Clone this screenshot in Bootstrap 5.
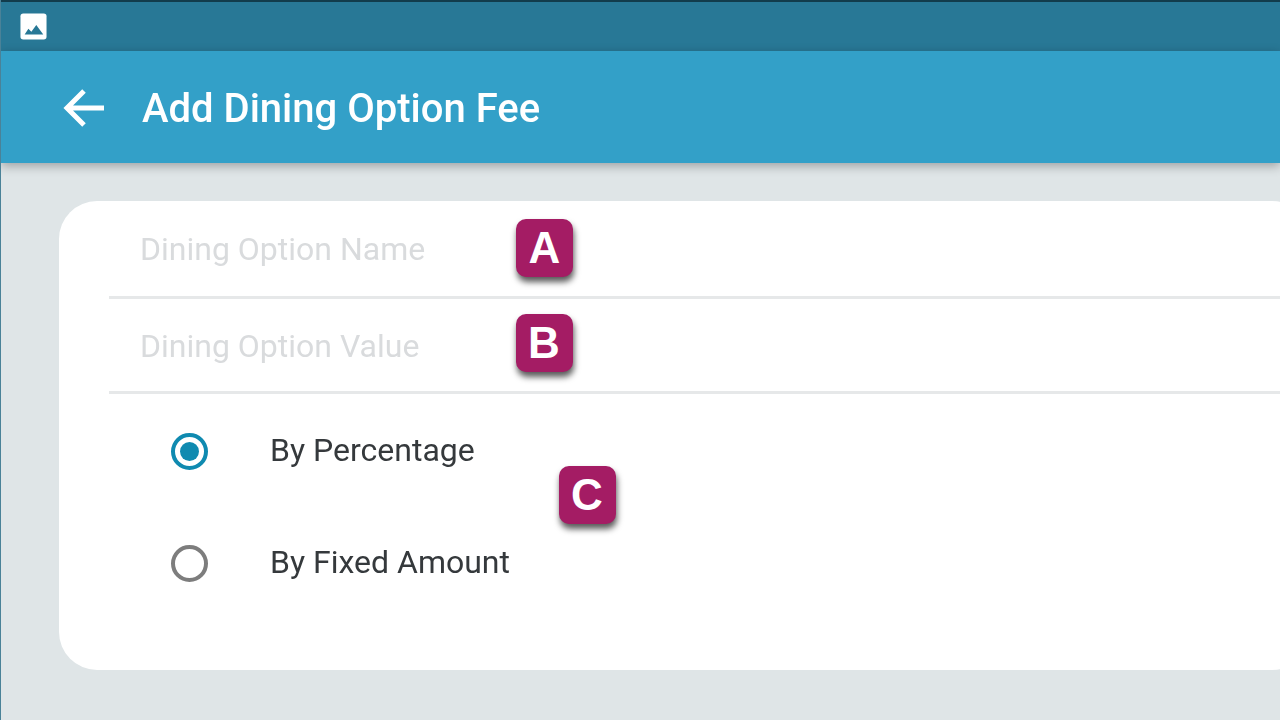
<!DOCTYPE html>
<html lang="en">
<head>
<meta charset="utf-8">
<title>Add Dining Option Fee</title>
<link rel="stylesheet" href="https://cdn.jsdelivr.net/npm/bootstrap@5.3.0/dist/css/bootstrap.min.css">
<style>
html,body{height:100%;}
body{font-family:Roboto,"Liberation Sans",sans-serif;background:#dfe5e7;overflow:hidden;position:relative;border-left:1px solid #4a8298;}
.status-strip{height:51px;background:#287896;border-top:2px solid #123c4c;padding-left:19px;}
.status-strip svg,.app-head svg,.app-title,.sheet{filter:blur(.5px);}
.app-head{height:112px;background:#33a0c8;box-shadow:0 3px 10px rgba(0,0,0,.3);padding-left:62px;gap:36px;position:relative;z-index:1;}
.app-head svg{margin-top:1px;}
.app-title{font-size:40px;font-weight:500;color:#fff;margin:3px 0 0;line-height:1;}
.sheet{margin:38px -30px 0 58px;height:469px;background:#fff;border-radius:38px;padding-left:50px;}
.field-row{border-bottom:3px solid #e6e8e9;padding-left:31px;font-size:32px;color:#d9dbdd;}
.field-first{height:98px;}
.field-second{height:95px;padding-top:2px;}
.option-row{height:112px;padding-left:62px;font-size:32px;color:#35393c;gap:62px;}
.option-text{margin-top:-2px;}
.option-list{padding-top:1px;}
.dot{width:37px;height:37px;border-radius:50%;border:4px solid #7d7d7d;flex:none;}
.dot-on{border-color:#0f8ab0;position:relative;}
.dot-on::after{content:"";position:absolute;inset:5px;border-radius:50%;background:#0f8ab0;}
.tag{position:absolute;width:57px;height:58px;border-radius:10px;background:#a41c64;color:#fff;font-family:"Liberation Sans",Arial,sans-serif;font-weight:700;font-size:44px;line-height:58px;text-align:center;box-shadow:1px 5px 6px rgba(0,0,0,.65);z-index:2;}
.tag-a{left:515px;top:219px;}
.tag-b{left:515px;top:314px;text-indent:-1px;}
.tag-c{left:558px;top:466px;text-indent:-1px;}
</style>
</head>
<body>
<div class="status-strip d-flex align-items-center">
<svg width="27" height="27" viewBox="0 0 29 29" aria-hidden="true"><rect x=".5" y=".5" width="28" height="28" rx="3" fill="#fff"/><path d="M5 23 9 17l3.2 3.2L17.5 13 25 23Z" fill="#287896"/></svg>
</div>
<header class="app-head d-flex align-items-center">
<svg width="43" height="40" viewBox="0 0 43 40" aria-hidden="true"><path d="M41 20H5M21 3 4 20l17 17" fill="none" stroke="#fff" stroke-width="5"/></svg>
<h1 class="app-title">Add Dining Option Fee</h1>
</header>
<main class="sheet">
<div class="field-row field-first d-flex align-items-center">Dining Option Name</div>
<div class="field-row field-second d-flex align-items-center">Dining Option Value</div>
<div class="option-list">
<div class="option-row d-flex align-items-center"><span class="dot dot-on"></span><span class="option-text">By Percentage</span></div>
<div class="option-row d-flex align-items-center"><span class="dot"></span><span class="option-text">By Fixed Amount</span></div>
</div>
</main>
<span class="tag tag-a">A</span>
<span class="tag tag-b">B</span>
<span class="tag tag-c">C</span>
<script src="https://cdn.jsdelivr.net/npm/bootstrap@5.3.0/dist/js/bootstrap.bundle.min.js"></script>
</body>
</html>
